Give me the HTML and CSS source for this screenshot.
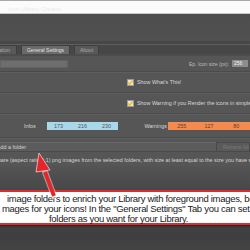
FILE: index.html
```html
<!DOCTYPE html>
<html>
<head>
<meta charset="utf-8">
<link rel="stylesheet" href="styles.css">
</head>
<body>
<div class="page">
  <div class="titlebar"><span class="title">Icon Library Creator</span></div>
  <div class="header"></div>
  <div class="tabs">
    <div class="tab">Generation</div>
    <div class="tab active">General Settings</div>
    <div class="tab">About</div>
  </div>
  <div class="panel">
    <div class="row size-row">
      <div class="path-box"></div>
      <div class="size-field">
        <span class="label">Ep. Icon size (px):</span>
        <span class="num-input">256</span>
      </div>
    </div>
    <div class="row check-row">
      <span class="check"><svg viewBox="0 0 7 7" width="7" height="7"><path d="M1 3.5 L3 5.5 L6.5 1" fill="none" stroke="#f0c400" stroke-width="1.6"/></svg></span>
      <span class="label">Show What's This!</span>
    </div>
    <div class="row check-row">
      <span class="check"><svg viewBox="0 0 7 7" width="7" height="7"><path d="M1 3.5 L3 5.5 L6.5 1" fill="none" stroke="#f0c400" stroke-width="1.6"/></svg></span>
      <span class="label">Show Warning if you Render the icons in simple mode</span>
    </div>
    <div class="row color-row">
      <span class="label infos-label">Infos</span>
      <div class="swatch blue"><span>173</span><span>216</span><span>230</span></div>
      <span class="label warn-label">Warnings</span>
      <div class="swatch orange"><span>255</span><span>127</span><span>80</span></div>
    </div>
    <div class="row folder-row">
      <div class="add-btn">Add a folder</div>
      <div class="remove-btn">Remove folder</div>
    </div>
    <div class="desc">Use square (aspect ratio 1:1) png images from the selected folders, with size at least equal to the size you have set as</div>
  </div>
  <div class="lower">
    <div class="callout">
      <p class="l1">image folders to enrich your Library with foreground images, because</p>
      <p class="l2">mages for your icons! In the "General Settings" Tab you can set</p>
      <p class="l3">folders as you want for your Library.</p>
    </div>
  </div>
  <svg class="arrow" width="40" height="50" viewBox="0 0 40 50">
    <path d="M27 46 L18 22" stroke="#fff" stroke-width="6" stroke-linecap="round" fill="none" opacity="0.5"/>
    <path d="M27 46 L18 22" stroke="#e3262b" stroke-width="4" fill="none"/>
    <path d="M12 3 L23 20 L9 22 Z" fill="#e3262b" stroke="#f4c9c9" stroke-width="0.8"/>
  </svg>
</div>
</body>
</html>
```

FILE: styles.css
```css
* { box-sizing: border-box; }
html, body { margin: 0; padding: 0; }
body {
  background: #424242;
  font-family: "Liberation Sans", Arial, sans-serif;
  width: 250px;
  height: 250px;
  overflow: hidden;
}
.page {
  position: relative;
  width: 250px;
  height: 250px;
  overflow: hidden;
}
.titlebar {
  height: 14px;
  background: #fbfbfb;
  border-top: 1px solid #a8a8a8;
  border-bottom: 1px solid #c8c8c8;
  padding-left: 8px;
  line-height: 9px;
}
.title {
  font-size: 6px;
  color: #ebebeb;
}
.header {
  height: 31px;
  background: linear-gradient(#4d4d4d, #515151);
  border-bottom: 1px solid #5e5e5e;
  box-shadow: inset 0 -3px 0 #474747;
}
.tabs {
  height: 11px;
  background: #474747;
  display: flex;
  align-items: flex-end;
  gap: 4px;
  margin-left: -22px;
  border-bottom: 2px solid #4c4c4c;
}
.tab {
  height: 9px;
  padding: 0 6px;
  font-size: 5px;
  line-height: 9px;
  color: #a9a9a9;
  background: #595959;
  border: 1px solid #3e3e3e;
  border-bottom: none;
}
.tab.active {
  background: #6a6a6a;
  color: #e2e2e2;
  width: 49px;
  text-align: center;
  padding: 0;
}
.tab:first-child { width: 39px; text-align: right; }
.tab:last-child { width: 25px; text-align: center; padding: 0; }
.panel {
  background: #565656;
}
.row {
  display: flex;
  align-items: center;
  border-bottom: 1px solid #4b4b4b;
  box-shadow: 0 1px 0 #5e5e5e;
}
.label {
  font-size: 5.4px;
  color: #d8d8d8;
  white-space: nowrap;
}
.size-row {
  height: 16px;
  justify-content: space-between;
}
.path-box {
  width: 68px;
  height: 8px;
  background: #6e6e6e;
  border: 1px solid #626262;
}
.size-field {
  display: flex;
  align-items: center;
  gap: 3px;
  padding-right: 2px;
}
.size-field .label { color: #bdbdbd; font-size: 5px; }
.num-input {
  width: 16px;
  height: 7px;
  background: #8c8c8c;
  color: #f2f2f2;
  font-size: 5px;
  line-height: 7px;
  padding-left: 2px;
}
.check-row {
  height: 21px;
  padding-left: 127px;
  gap: 3px;
}
.check {
  width: 7px;
  height: 7px;
  background: #e6e6e6;
  border: 1px solid #9a9a9a;
  display: flex;
}
.check svg { display: block; margin: -1px 0 0 -1px; }
.color-row {
  height: 24px;
}
.infos-label { margin-left: 24px; width: 24px; }
.swatch {
  display: flex;
  height: 8px;
  font-size: 5.4px;
  line-height: 8px;
  color: #555;
}
.swatch span { flex: 1; text-align: center; }
.blue { width: 76px; background: #a8d8ea; margin-right: 26px; }
.warn-label { width: 25px; }
.orange { width: 82px; flex: none; background: #f58a4f; color: #6a3a24; }
.folder-row {
  height: 18px;
  border-bottom: none;
  box-shadow: none;
}
.add-btn {
  flex: 1;
  height: 10px;
  background: #5c5c5c;
  border-top: 1px solid #666;
  border-bottom: 1px solid #4a4a4a;
  font-size: 5.4px;
  line-height: 9px;
  color: #cfcfcf;
  margin-left: -3px;
}
.remove-btn {
  width: 34px;
  height: 10px;
  background: #5a5a5a;
  border: 1px solid #4a4a4a;
  font-size: 5px;
  line-height: 9px;
  color: #7a7a7a;
  padding-left: 6px;
  white-space: nowrap;
  overflow: hidden;
}
.desc {
  height: 10px;
  font-size: 5.4px;
  line-height: 8px;
  color: #d4d4d4;
  white-space: nowrap;
  margin-left: -19px;
}
.lower {
  height: 86px;
  background: linear-gradient(#545454 0, #4a4a4a 20px, #3f3f3f 70px, #444 86px);
  padding-top: 24px;
}
.callout {
  margin: 0 -10px;
  height: 35px;
  background: #fff;
  border: 2px solid #e02a2c;
  box-shadow: 0 1px 2px rgba(0,0,0,0.5);
  padding: 2px 0 0 10px;
}
.callout p {
  margin: 0;
  font-size: 9.5px;
  letter-spacing: -0.3px;
  line-height: 10px;
  color: #1a1a1a;
  white-space: nowrap;
}
.l1 { padding-left: 5px; }
.l2 { padding-left: 0; }
.l3 { padding-left: 47px; }
.arrow {
  position: absolute;
  left: 27px;
  top: 150px;
}
```
